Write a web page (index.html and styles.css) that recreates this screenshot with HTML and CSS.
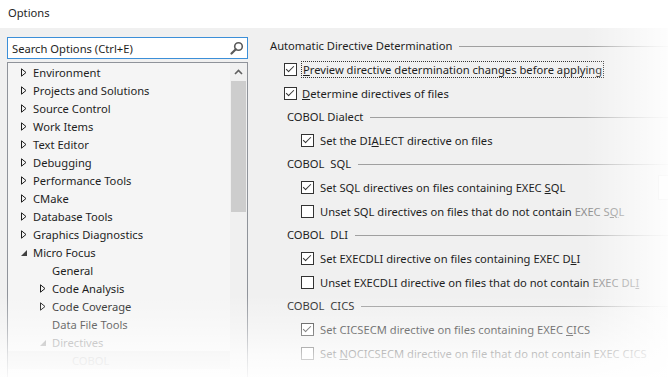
FILE: index.html
```html
<!DOCTYPE html>
<html lang="en">
<head>
    <meta charset="UTF-8">
    <title>Options</title>
    <link rel="stylesheet" href="styles.css">
</head>
<body>
    <div class="titulo">Options</div>
    <div class="janela">
        <div class="esquerda">
            <div class="busca">
                <span>Search Options (Ctrl+E)</span>
                <svg class="lupa" width="14" height="14" viewBox="0 0 14 14">
                    <circle cx="8.5" cy="5.5" r="3.8" fill="none" stroke="#5a5a5a" stroke-width="1.6"/>
                    <line x1="5.8" y1="8.2" x2="1.5" y2="12.5" stroke="#5a5a5a" stroke-width="2.2" stroke-linecap="round"/>
                </svg>
            </div>
            <div class="arvore">
                <ul class="itens">
                    <li class="n1"><svg class="seta" viewBox="0 0 6 9"><path d="M0.5 0.8 L5 4.5 L0.5 8.2 Z" fill="none" stroke="#1e1e1e"/></svg>Environment</li>
                    <li class="n1"><svg class="seta" viewBox="0 0 6 9"><path d="M0.5 0.8 L5 4.5 L0.5 8.2 Z" fill="none" stroke="#1e1e1e"/></svg>Projects and Solutions</li>
                    <li class="n1"><svg class="seta" viewBox="0 0 6 9"><path d="M0.5 0.8 L5 4.5 L0.5 8.2 Z" fill="none" stroke="#1e1e1e"/></svg>Source Control</li>
                    <li class="n1"><svg class="seta" viewBox="0 0 6 9"><path d="M0.5 0.8 L5 4.5 L0.5 8.2 Z" fill="none" stroke="#1e1e1e"/></svg>Work Items</li>
                    <li class="n1"><svg class="seta" viewBox="0 0 6 9"><path d="M0.5 0.8 L5 4.5 L0.5 8.2 Z" fill="none" stroke="#1e1e1e"/></svg>Text Editor</li>
                    <li class="n1"><svg class="seta" viewBox="0 0 6 9"><path d="M0.5 0.8 L5 4.5 L0.5 8.2 Z" fill="none" stroke="#1e1e1e"/></svg>Debugging</li>
                    <li class="n1"><svg class="seta" viewBox="0 0 6 9"><path d="M0.5 0.8 L5 4.5 L0.5 8.2 Z" fill="none" stroke="#1e1e1e"/></svg>Performance Tools</li>
                    <li class="n1"><svg class="seta" viewBox="0 0 6 9"><path d="M0.5 0.8 L5 4.5 L0.5 8.2 Z" fill="none" stroke="#1e1e1e"/></svg>CMake</li>
                    <li class="n1"><svg class="seta" viewBox="0 0 6 9"><path d="M0.5 0.8 L5 4.5 L0.5 8.2 Z" fill="none" stroke="#1e1e1e"/></svg>Database Tools</li>
                    <li class="n1"><svg class="seta" viewBox="0 0 6 9"><path d="M0.5 0.8 L5 4.5 L0.5 8.2 Z" fill="none" stroke="#1e1e1e"/></svg>Graphics Diagnostics</li>
                    <li class="n1"><svg class="seta" viewBox="0 0 6 9"><path d="M6 2 L6 8 L0 8 Z" fill="#404040"/></svg>Micro Focus</li>
                    <li class="n3">General</li>
                    <li class="n2"><svg class="seta" viewBox="0 0 6 9"><path d="M0.5 0.8 L5 4.5 L0.5 8.2 Z" fill="none" stroke="#1e1e1e"/></svg>Code Analysis</li>
                    <li class="n2"><svg class="seta" viewBox="0 0 6 9"><path d="M0.5 0.8 L5 4.5 L0.5 8.2 Z" fill="none" stroke="#1e1e1e"/></svg>Code Coverage</li>
                    <li class="n3">Data File Tools</li>
                    <li class="n2 cinza"><svg class="seta" viewBox="0 0 6 9"><path d="M6 2 L6 8 L0 8 Z" fill="#9a9a9a"/></svg>Directives</li>
                    <li class="n4 selecionado">COBOL</li>
                </ul>
                <div class="rolagem">
                    <div class="botao">
                        <svg width="9" height="6" viewBox="0 0 9 6"><path d="M1 5 L4.5 1.5 L8 5" fill="none" stroke="#606060" stroke-width="1.6"/></svg>
                    </div>
                    <div class="polegar"></div>
                </div>
            </div>
        </div>

        <div class="direita">
            <div class="secao topo"><span>Automatic Directive Determination</span><i class="linha"></i></div>
            <div class="opcao n1"><i class="caixa marcada"></i><span class="foco"><u>P</u>review directive determination changes before applying</span></div>
            <div class="opcao n1"><i class="caixa marcada"></i><span><u>D</u>etermine directives of files</span></div>

            <div class="secao"><span>COBOL Dialect</span><i class="linha"></i></div>
            <div class="opcao"><i class="caixa marcada"></i><span>Set the DI<u>A</u>LECT directive on files</span></div>

            <div class="secao"><span>COBOL&nbsp; SQL</span><i class="linha"></i></div>
            <div class="opcao"><i class="caixa marcada"></i><span>Set SQL directives on files containing EXEC <u>S</u>QL</span><i class="campo"></i></div>
            <div class="opcao"><i class="caixa"></i><span>Unset SQL directives on files that do not contain <em>EXEC S<u>Q</u>L</em></span></div>

            <div class="secao"><span>COBOL&nbsp; DLI</span><i class="linha"></i></div>
            <div class="opcao"><i class="caixa marcada"></i><span>Set EXECDLI directive on files containing EXEC D<u>L</u>I</span></div>
            <div class="opcao"><i class="caixa"></i><span>Unset EXECDLI directive on files that do not contain <em>EXEC DL<u>I</u></em></span></div>

            <div class="secao"><span>COBOL&nbsp; CICS</span><i class="linha"></i></div>
            <div class="opcao"><i class="caixa marcada"></i><span>Set CICSECM directive on files containing EXEC <u>C</u>ICS</span></div>
            <div class="opcao"><i class="caixa"></i><span>Set <u>N</u>OCICSECM directive on file that do not contain EXEC CICS</span></div>
        </div>
    </div>
    <div class="esmaecer"></div>
</body>
</html>
```

FILE: styles.css
```css
body{
    margin: 0;
    width: 668px;
    height: 377px;
    overflow: hidden;
    background-color: #f0f0f0;
    font-family: "Noto Sans", sans-serif;
    font-size: 11.2px;
    color: #1e1e1e;
    position: relative;
}
.titulo{
    height: 28px;
    line-height: 26px;
    padding-left: 8px;
    background-color: white;
}
.janela{
    display: flex;
    padding-top: 9px;
}
.esquerda{
    width: 241px;
    margin-left: 7px;
    flex-shrink: 0;
}
.busca{
    height: 20px;
    border: 1px solid #3c8fd8;
    background-color: white;
    display: flex;
    align-items: center;
    padding-left: 4px;
    padding-right: 3px;
}
.busca span{
    flex: 1;
}
.arvore{
    margin-top: 3px;
    height: 330px;
    border: 1px solid #8f939a;
    background-color: #f5f5f5;
    display: flex;
}
.itens{
    list-style: none;
    margin: 0;
    padding: 0;
    flex: 1;
}
.itens li{
    height: 18px;
    display: flex;
    align-items: center;
    white-space: nowrap;
}
.n1{ padding-left: 13px; }
.n2{ padding-left: 32px; }
.n3{ padding-left: 44px; }
.n4{ padding-left: 64px; }
.cinza{ color: #8a8a8a; }
.selecionado{
    background-color: #e6e6e6;
    color: #b0b0b0;
}
.seta{
    width: 6px;
    height: 9px;
    margin-right: 6px;
    flex-shrink: 0;
}
.rolagem{
    width: 17px;
    background-color: #f0f0f0;
}
.botao{
    height: 17px;
    display: flex;
    align-items: center;
    justify-content: center;
}
.polegar{
    margin: 1px 1px 0 1px;
    height: 131px;
    background-color: #cdcdcd;
}

.direita{
    margin-left: 22px;
    width: 420px;
    flex-shrink: 0;
}
.secao{
    height: 23px;
    display: flex;
    align-items: center;
    padding-left: 17px;
}
.secao.topo{
    padding-left: 0;
    margin-top: -3px;
}
.linha{
    flex: 1;
    height: 1px;
    margin-left: 7px;
    margin-top: 2px;
    background: linear-gradient(to right, #a0a0a0, #a0a0a0 60%, #e8e8e8);
}
.opcao{
    height: 24px;
    display: flex;
    align-items: center;
    padding-left: 31px;
    white-space: nowrap;
}
.opcao.n1{ padding-left: 14px; }
.caixa{
    width: 11px;
    height: 11px;
    border: 1px solid #333;
    background-color: white;
    margin-right: 6px;
    flex-shrink: 0;
    position: relative;
}
.opcao.n1 .caixa{ margin-right: 5px; }
.caixa.marcada::after{
    content: "";
    position: absolute;
    left: 3px;
    top: 0px;
    width: 3px;
    height: 7px;
    border-right: 1.2px solid #333;
    border-bottom: 1.2px solid #333;
    transform: rotate(45deg);
}
.foco{
    outline: 1px dotted #333;
    padding: 0 1px;
}
u{ text-decoration-thickness: 1px; }
em{
    font-style: normal;
    color: #8c8c8c;
}
.campo{
    margin-left: auto;
    width: 30px;
    height: 23px;
    border: 1px solid #e0e0e0;
    background-color: #fbfbfb;
}
.esmaecer{
    position: absolute;
    left: 0;
    top: 0;
    width: 668px;
    height: 377px;
    pointer-events: none;
    background:
        linear-gradient(to bottom, rgba(255,255,255,0) 295px, rgba(255,255,255,0.38) 330px, rgba(255,255,255,0.74) 356px, rgba(255,255,255,0.92) 377px),
        linear-gradient(to right, rgba(255,255,255,0) 585px, rgba(255,255,255,0.85) 668px);
}
```
